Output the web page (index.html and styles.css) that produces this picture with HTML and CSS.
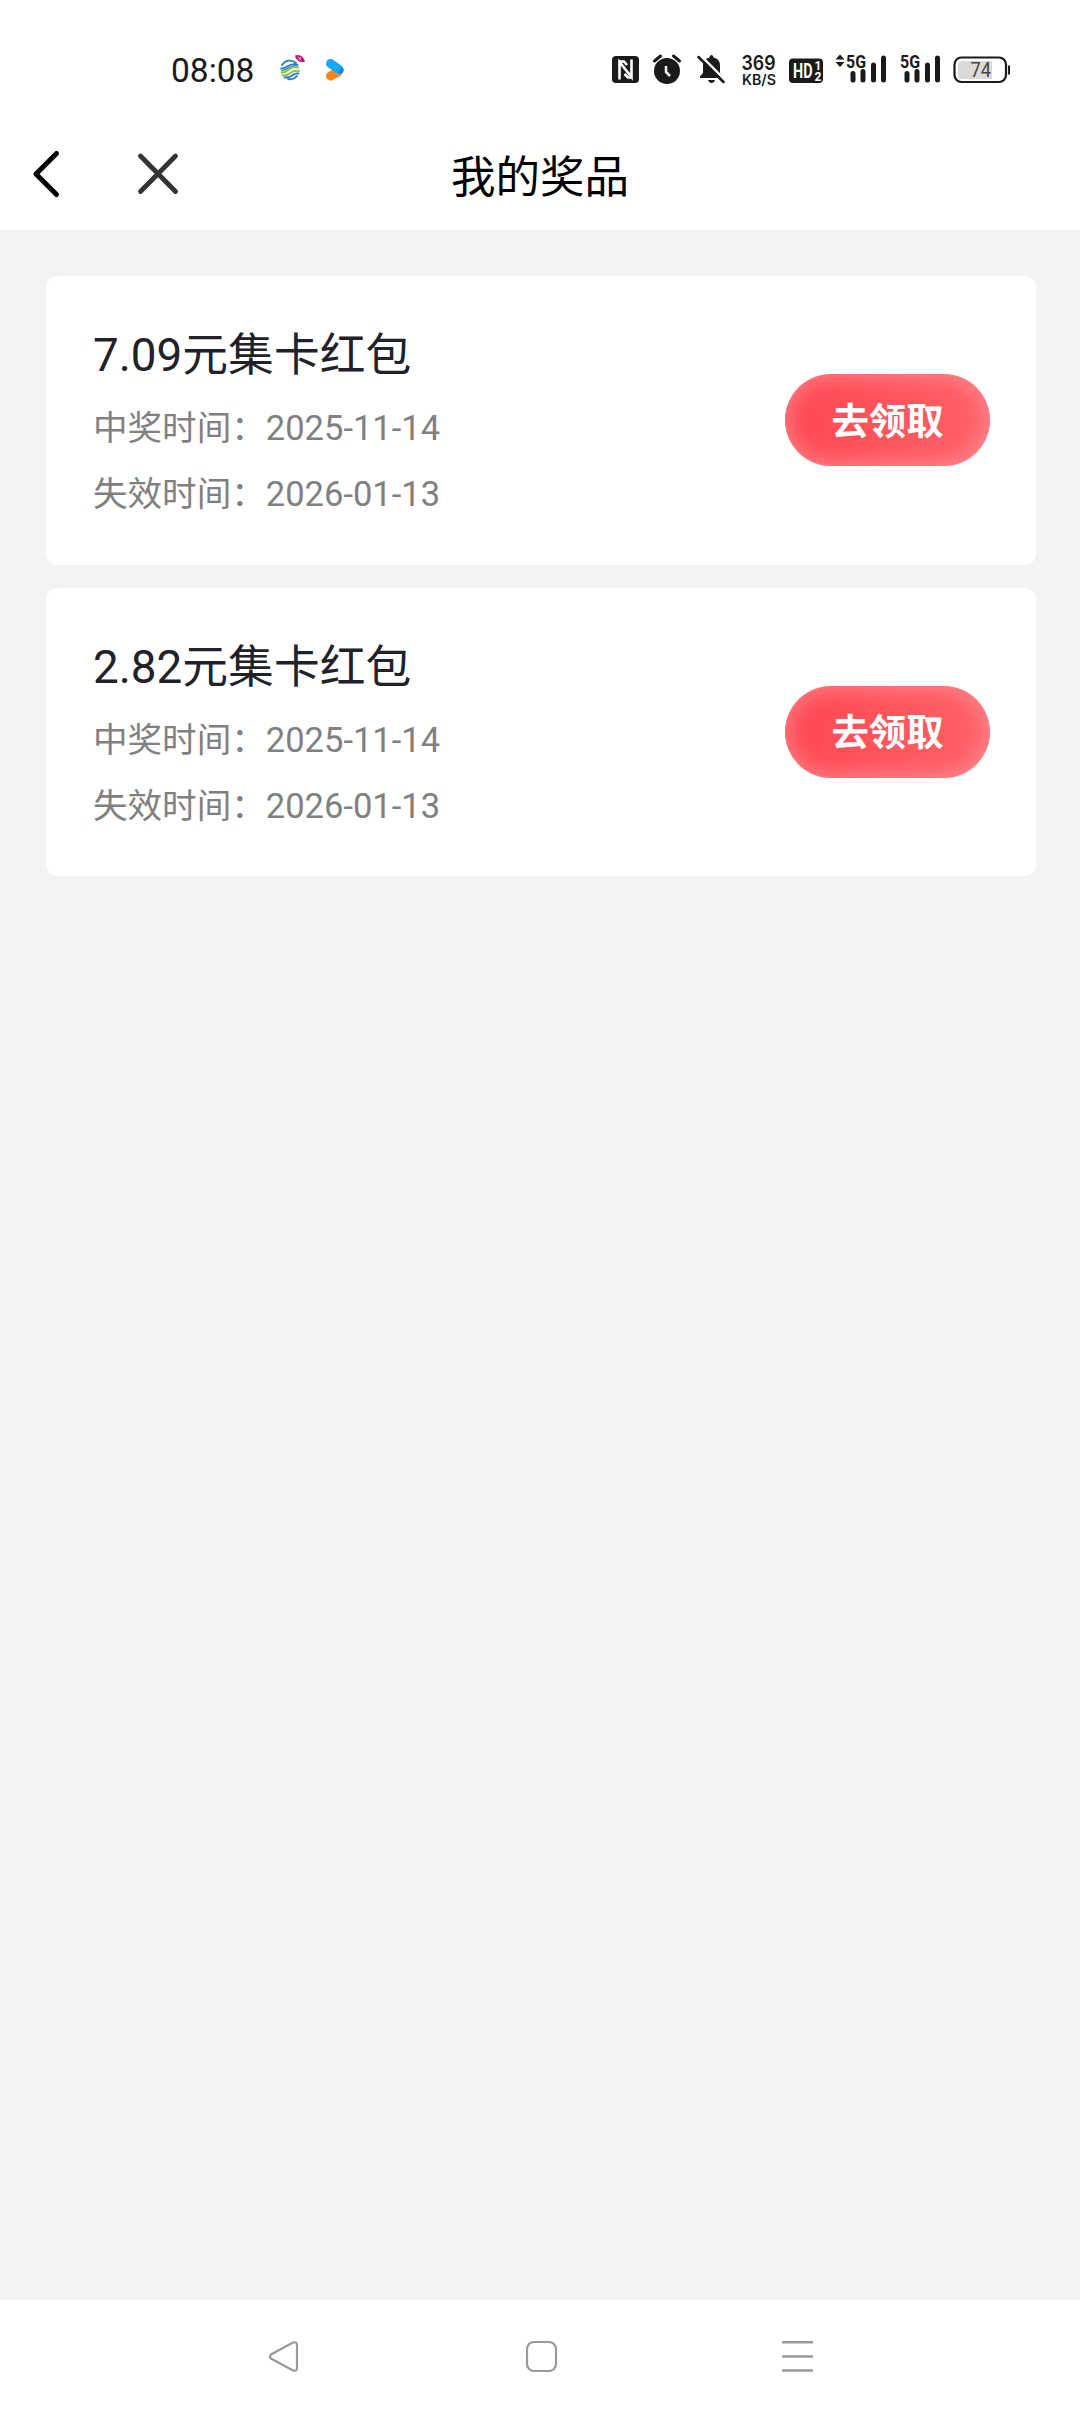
FILE: index.html
```html
<!DOCTYPE html>
<html lang="zh-CN">
<head>
<meta charset="utf-8">
<title>我的奖品</title>
<link rel="stylesheet" href="styles.css">
</head>
<body>
<div class="status">
  <span class="clock">08:08</span>
  <svg class="app-mobile" viewBox="280 52 26 36" width="26" height="36">
    <g fill="none" stroke-linecap="round">
      <path d="M282 65A9.200 9.200 0 0 1 296 63M281.200 68.500C287 69 288 62 297.500 64.500" stroke="#2a7fc4" stroke-width="1.800"/>
      <path d="M281.500 72.500C289 73.500 288 65 298 67.500M282.500 75.500C292 76 290 69 299 71" stroke="#8cc63f" stroke-width="2"/>
      <path d="M284.500 77.500C293 78 292 72.500 298.500 73.500M288 79A9.200 9.200 0 0 0 297 76" stroke="#2a7fc4" stroke-width="1.800"/>
      <path d="M281.500 70.500C288.500 71 288.500 63.500 298 66" stroke="#2a7fc4" stroke-width="1.200"/>
    </g>
    <path d="M295 55.500Q303 53.500 305 62Q296 63 295 55.500Z" fill="#c4177c"/>
    <path d="M298 57l3 3m0-3l-2 3" stroke="#f3b4d4" stroke-width="1"/>
  </svg>
  <svg class="app-play" viewBox="325 52 20 36" width="20" height="36">
    <path d="M330.500 76L338 72" stroke="#ff8412" stroke-width="9" stroke-linecap="round"/>
    <path d="M330.500 63.500L339 69.500" stroke="#18a8f5" stroke-width="9" stroke-linecap="round"/>
    <path d="M343.600 69A4.800 4.800 0 0 1 341 74L338 73L341 68Z" fill="#1d83dc"/>
  </svg>
  <svg class="nfc" viewBox="612 52 28 36" width="28" height="36">
    <rect x="612" y="56" width="27" height="27" rx="4" fill="#1a1a1a"/>
    <path d="M619.500 79.500V62L631.500 77V59.500M619.500 61.500H624L627 65M631.500 77.500H628L624.500 74" fill="none" stroke="#fff" stroke-width="2.600"/>
  </svg>
  <svg class="alarm" viewBox="653 52 28 36" width="28" height="36">
    <circle cx="667" cy="71" r="13" fill="#1a1a1a"/>
    <path d="M654.500 61l6-5M679.500 61l-6-5" stroke="#1a1a1a" stroke-width="3" stroke-linecap="round"/>
    <path d="M666 66v6l4 4" fill="none" stroke="#fff" stroke-width="2.500"/>
  </svg>
  <svg class="mute" viewBox="697 52 28 36" width="28" height="36">
    <path d="M700 76.500L703 73V66Q703 58.500 709.500 57.500Q709.500 55 711.500 55T713.500 57.500Q720 58.500 720 66V73L723 76.500V78H700ZM708 80H715Q714 83 711.500 83T708 80Z" fill="#1a1a1a"/>
    <path d="M699.500 54.500L726 81" stroke="#fff" stroke-width="2.500"/>
    <path d="M698.500 57L723.500 82" stroke="#1a1a1a" stroke-width="2.500" stroke-linecap="round"/>
  </svg>
  <svg class="speed" viewBox="740 52 38 36" width="38" height="36">
    <text x="741.500" y="70" class="speed-value" textLength="34" lengthAdjust="spacingAndGlyphs">369</text>
    <text x="742" y="85" class="speed-unit" textLength="34" lengthAdjust="spacingAndGlyphs">KB/S</text>
  </svg>
  <svg class="hd" viewBox="789 52 35 36" width="35" height="36">
    <rect x="789" y="58.500" width="34" height="24.500" rx="4" fill="#1a1a1a"/>
    <text x="793" y="78" class="hd-text" textLength="19.500" lengthAdjust="spacingAndGlyphs">HD</text>
    <text x="814.500" y="70" class="hd-num">1</text>
    <text x="814.500" y="81" class="hd-num">2</text>
  </svg>
  <svg class="signal-a" viewBox="835 52 52 36" width="52" height="36">
    <path d="M835.500 59.500L840 54.500L844.500 59.500ZM835.500 62L840 67L844.500 62Z" fill="#1a1a1a"/>
    <text x="846" y="67.500" class="net" textLength="20" lengthAdjust="spacingAndGlyphs">5G</text>
    <path d="M853 73.500v6.500M863 71.500v8.500M873.500 65v15M883.500 58v22" stroke="#1a1a1a" stroke-width="5" stroke-linecap="round"/>
  </svg>
  <svg class="signal-b" viewBox="900 52 41 36" width="41" height="36">
    <text x="900" y="67.500" class="net" textLength="20" lengthAdjust="spacingAndGlyphs">5G</text>
    <path d="M907 73.500v6.500M917 71.500v8.500M927.500 65v15M937.500 58v22" stroke="#1a1a1a" stroke-width="5" stroke-linecap="round"/>
  </svg>
  <svg class="battery" viewBox="953 52 58 36" width="58" height="36">
    <rect x="954.500" y="57.500" width="51.500" height="24.500" rx="7" fill="#fff" stroke="#1a1a1a" stroke-width="2.200"/>
    <path d="M962 61H992V79H962Q958 79 958 75V65Q958 61 962 61Z" fill="#dadada"/>
    <path d="M1009 65.500v9" stroke="#1a1a1a" stroke-width="2"/>
    <text x="970.500" y="77" class="battery-text" textLength="20.500" lengthAdjust="spacingAndGlyphs">74</text>
  </svg>
</div>
<header class="header">
  <svg class="back" viewBox="30 148 32 52" width="32" height="52"><path d="M56.500 153.500L36 174L56.500 194.500" fill="none" stroke="#000" stroke-width="5" stroke-linecap="round" stroke-linejoin="round"/></svg>
  <svg class="close" viewBox="136 148 44 52" width="44" height="52"><path d="M140.500 156L175.500 191.500M175.500 156L140.500 191.500" stroke="#333" stroke-width="4.800" stroke-linecap="round"/></svg>
  <h1 class="title">我的奖品</h1>
</header>
<main class="prizes">
  <article class="card">
    <div class="info">
      <h2 class="name">7.09元集卡红包</h2>
      <p class="date">中奖时间：2025-11-14</p>
      <p class="date">失效时间：2026-01-13</p>
    </div>
    <button class="claim">去领取</button>
  </article>
  <article class="card">
    <div class="info">
      <h2 class="name">2.82元集卡红包</h2>
      <p class="date">中奖时间：2025-11-14</p>
      <p class="date">失效时间：2026-01-13</p>
    </div>
    <button class="claim">去领取</button>
  </article>
</main>
<nav class="navbar">
  <svg class="nav-back" viewBox="266 2338 36 36" width="36" height="36"><path d="M293 2342.500L271 2354.500Q269 2356.500 271 2358.500L293 2370.500Q297 2371.500 297 2368V2345Q297 2341.500 293 2342.500Z" fill="none" stroke="#999" stroke-width="2.200"/></svg>
  <svg class="nav-home" viewBox="523 2338 36 36" width="36" height="36"><rect x="527" y="2342" width="29" height="29" rx="7" fill="none" stroke="#999" stroke-width="2.200"/></svg>
  <svg class="nav-menu" viewBox="780 2338 36 36" width="36" height="36"><path d="M782 2342.300h31M782 2356.500h31M782 2370.500h31" stroke="#999" stroke-width="2.600"/></svg>
</nav>
</body>
</html>
```
FILE: styles.css
```css
* { box-sizing: border-box; }
body {
  margin: 0;
  height: 2412px;
  display: flex;
  flex-direction: column;
  background: #f1f3f5;
  font-family: Roboto, "Noto Sans CJK SC", sans-serif;
}
h1, h2, p { margin: 0; font-weight: 400; }
svg { display: block; flex: none; overflow: visible; }
text { fill: #1a1a1a; }

.status {
  height: 120px;
  padding: 52px 69px 0 171px;
  display: flex;
  background: #fff;
}
.clock { width: 109px; font-size: 33.5px; line-height: 37px; color: #1a1a1a; }
.app-play { margin-left: 19px; }
.nfc { margin-left: auto; }
.alarm { margin-left: 13px; }
.mute { margin-left: 16px; }
.speed { margin-left: 15px; }
.hd { margin-left: 11px; }
.signal-a { margin-left: 11px; }
.signal-b { margin-left: 13px; }
.battery { margin-left: 12px; }
.speed-value { font: 600 20px Inter, sans-serif; }
.speed-unit { font: 600 14px Inter, sans-serif; }
.hd-text { font: 700 20px Roboto, sans-serif; fill: #fff; }
.hd-num { font: 700 12px Roboto, sans-serif; fill: #fff; }
.net { font: 700 18px Roboto, sans-serif; }
.battery-text { font: 400 20px Roboto, sans-serif; fill: #444; }

.header {
  height: 110px;
  padding: 0 30px;
  display: grid;
  grid-template-columns: 106px 150px 1fr 256px;
  align-items: start;
  background: #fff;
}
.back, .close { margin-top: 28px; }
.title {
  margin-top: 26px;
  text-align: center;
  font-size: 44.5px;
  line-height: 64px;
  color: #000;
}

.prizes {
  flex: 1;
  padding: 46px 44px 0 46px;
  display: flex;
  flex-direction: column;
  gap: 23px;
}
.card {
  height: 288.5px;
  padding: 0 46px 0 47px;
  display: flex;
  justify-content: space-between;
  align-items: center;
  border-radius: 11.5px;
  background: #fff;
}
.info { padding-top: 8px; }
.name { margin-bottom: 4px; font-size: 45.8px; line-height: 70px; color: #222128; }
.date { font-size: 34.56px; line-height: 66px; color: #808080; }
.claim {
  width: 205px;
  height: 92px;
  padding: 0 0 3px;
  border: 0;
  border-radius: 46px;
  background: linear-gradient(100deg, #ff4750, #ff6369);
  box-shadow: inset 0 0 23px rgba(255, 170, 176, .7);
  font: 700 37.4px Roboto, "Noto Sans CJK SC", sans-serif;
  color: #fff;
}

.navbar {
  height: 112px;
  padding: 38px 264px 0 266px;
  display: flex;
  justify-content: space-between;
  background: #fff;
}
```
